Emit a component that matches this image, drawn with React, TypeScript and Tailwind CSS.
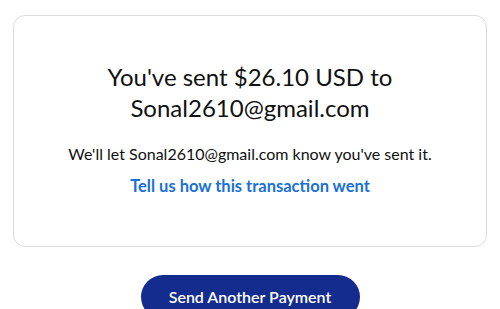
export default function App() {
    return (
        <div className="w-[500px] h-[309px] overflow-hidden bg-white font-['Lato',sans-serif]">
            <div className="pt-[15px] px-[13px]">
                <div className="flex flex-col items-center h-[232px] rounded-[12px] border border-[#dcdcdc] pt-[45px] text-center">
                    <h1 className="text-[24px] leading-[31px] text-[#111]">
                        You've sent $26.10 USD to
                        <br />
                        Sonal2610@gmail.com
                    </h1>
                    <p className="mt-[21px] text-[16px] leading-[20px] text-[#111]">
                        We'll let Sonal2610@gmail.com know you've sent it.
                    </p>
                    <a className="mt-[12px] text-[16.5px] leading-[20px] font-bold text-[#1a6fd8]">
                        Tell us how this transaction went
                    </a>
                </div>
            </div>
            <div className="flex justify-center mt-[28px]">
                <button className="w-[219px] h-[44px] rounded-full bg-[#142c8e] text-white text-[16px] font-semibold">
                    Send Another Payment
                </button>
            </div>
        </div>
    );
}
